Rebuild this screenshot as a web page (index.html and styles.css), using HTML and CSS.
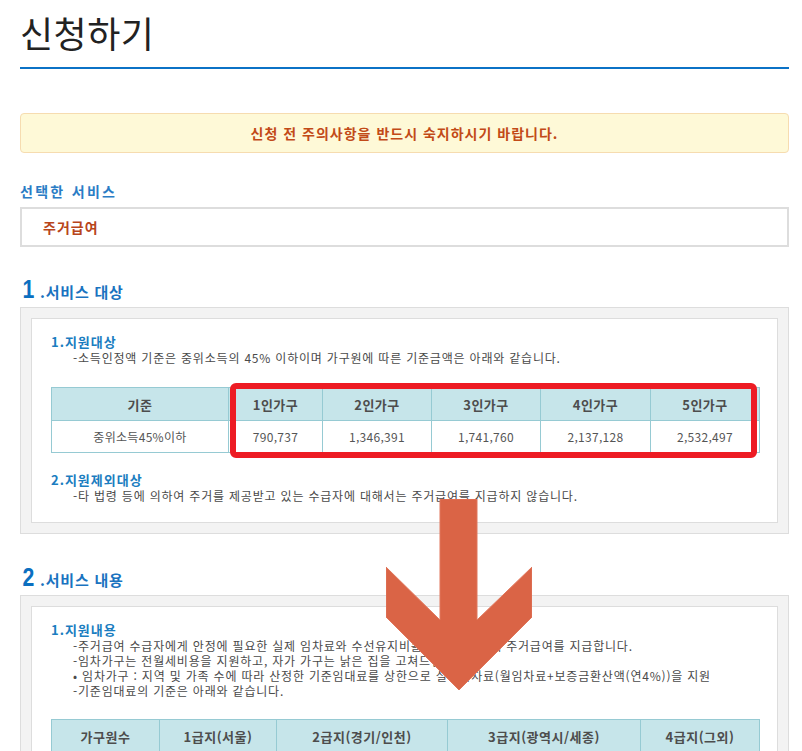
FILE: index.html
```html
<!DOCTYPE html>
<html lang="ko">
<head>
<meta charset="utf-8">
<title>신청하기</title>
<link rel="stylesheet" href="styles.css">
</head>
<body>
<div class="page">
  <h1 class="title">신청하기</h1>

  <div class="notice">신청 전 주의사항을 반드시 숙지하시기 바랍니다.</div>

  <h2 class="label">선택한 서비스</h2>
  <div class="service-box">주거급여</div>

  <h2 class="sec-head"><span class="num">1</span><span class="sec-text">.서비스 대상</span></h2>
  <div class="outer">
    <div class="inner">
      <h3 class="sub">1.지원대상</h3>
      <p class="desc">-소득인정액 기준은 중위소득의 45% 이하이며 가구원에 따른 기준금액은 아래와 같습니다.</p>
      <div class="table-wrap">
        <table class="grid t1">
          <colgroup>
            <col class="c177"><col class="c94"><col class="c109"><col class="c109"><col class="c110"><col class="c109">
          </colgroup>
          <thead>
            <tr><th>기준</th><th>1인가구</th><th>2인가구</th><th>3인가구</th><th>4인가구</th><th>5인가구</th></tr>
          </thead>
          <tbody>
            <tr><td>중위소득45%이하</td><td>790,737</td><td>1,346,391</td><td>1,741,760</td><td>2,137,128</td><td>2,532,497</td></tr>
          </tbody>
        </table>
        <div class="highlight"></div>
      </div>
      <h3 class="sub sub2">2.지원제외대상</h3>
      <p class="desc">-타 법령 등에 의하여 주거를 제공받고 있는 수급자에 대해서는 주거급여를 지급하지 않습니다.</p>
    </div>
  </div>

  <h2 class="sec-head sec2"><span class="num">2</span><span class="sec-text">.서비스 내용</span></h2>
  <div class="outer">
    <div class="inner">
      <h3 class="sub">1.지원내용</h3>
      <p class="desc">-주거급여 수급자에게 안정에 필요한 실제 임차료와 수선유지비를 지원하기 위해 주거급여를 지급합니다.</p>
      <p class="desc">-임차가구는 전월세비용을 지원하고, 자가 가구는 낡은 집을 고쳐드립니다.</p>
      <p class="desc">• 임차가구 : 지역 및 가족 수에 따라 산정한 기준임대료를 상한으로 실제임차료(월임차료+보증금환산액(연4%))을 지원</p>
      <p class="desc">-기준임대료의 기준은 아래와 같습니다.</p>
      <table class="grid t2">
        <colgroup>
          <col class="c108"><col class="c117"><col class="c171"><col class="c193"><col class="c119">
        </colgroup>
        <thead>
          <tr><th>가구원수</th><th>1급지(서울)</th><th>2급지(경기/인천)</th><th>3급지(광역시/세종)</th><th>4급지(그외)</th></tr>
        </thead>
      </table>
    </div>
  </div>
</div>

<svg class="arrow" width="146" height="191" viewBox="0 0 146 191" aria-hidden="true">
  <polygon points="54,0 91,0 91,121 146,68 146,118 73,191 0,118 0,68 54,121" fill="#da6446" stroke="#e0775c" stroke-width="1"/>
</svg>
</body>
</html>
```

FILE: styles.css
```css
html, body {
  margin: 0;
  padding: 0;
  background: #ffffff;
}

body {
  font-family: "Noto Sans CJK KR", "Noto Sans", sans-serif;
  color: #444;
  position: relative;
}

.page {
  width: 769px;
  margin-left: 20px;
  padding-bottom: 40px;
}

.title {
  margin: 0;
  padding: 10px 0 13px;
  font-size: 36px;
  line-height: 44px;
  font-weight: 400;
  color: #222;
  letter-spacing: 0.5px;
  border-bottom: 2px solid #0b72c6;
}

.notice {
  margin-top: 44px;
  height: 38px;
  line-height: 38px;
  text-align: center;
  background: #fef9d7;
  border: 1px solid #f6dcb0;
  border-radius: 4px;
  color: #c24a17;
  font-size: 14px;
  font-weight: 700;
  letter-spacing: 1px;
}

.label {
  margin: 28px 0 0;
  font-size: 14px;
  line-height: 20px;
  font-weight: 700;
  color: #2a7cc5;
  letter-spacing: 2.3px;
}

.service-box {
  margin-top: 6px;
  height: 36px;
  line-height: 36px;
  border: 2px solid #dddddd;
  padding-left: 21px;
  color: #b8451a;
  font-size: 14px;
  font-weight: 700;
  letter-spacing: 1px;
}

.sec-head {
  margin: 30px 0 0;
  height: 24px;
  line-height: 24px;
  display: flex;
  align-items: baseline;
  color: #1a73c0;
  font-weight: 700;
}

.sec-head.sec2 {
  margin-top: 31px;
}

.num {
  font-size: 25px;
  color: #0b6fc0;
  padding-left: 3px;
  font-family: "Liberation Sans", sans-serif;
  font-weight: 700;
  transform: scaleX(0.85);
  transform-origin: left center;
  width: 15px;
}

.sec-text {
  font-size: 15px;
  padding-left: 2px;
  letter-spacing: 0.8px;
}

.outer {
  margin-top: 6px;
  border: 1px solid #dddddd;
  background: #f3f3f3;
  padding: 10px;
}

.inner {
  background: #ffffff;
  border: 1px solid #dddddd;
  padding: 15px 19px 19px;
}

.sub {
  margin: 0;
  font-size: 13px;
  line-height: 16px;
  font-weight: 700;
  color: #1a7dc0;
  letter-spacing: 1px;
}

.sub2 {
  margin-top: 19px;
}

.desc {
  margin: 0;
  padding-left: 22px;
  font-size: 12px;
  line-height: 15px;
  color: #4a4a4a;
  white-space: nowrap;
  letter-spacing: 0.8px;
}

.table-wrap {
  position: relative;
  margin-top: 22px;
}

.grid {
  width: 708px;
  border-collapse: collapse;
  table-layout: fixed;
}

.t2 {
  margin-top: 21px;
}

.grid th,
.grid td {
  border: 1px solid #96cad3;
  text-align: center;
  padding: 0;
}

.grid th {
  height: 32px;
  background: #c6e5ea;
  color: #4d4d4d;
  font-size: 13px;
  font-weight: 700;
  letter-spacing: 0.5px;
}

.grid td {
  height: 31px;
  background: #ffffff;
  color: #555;
  font-size: 12px;
  letter-spacing: 0.3px;
}

.c177 { width: 177px; }
.c94 { width: 94px; }
.c108 { width: 108px; }
.c109 { width: 109px; }
.c110 { width: 110px; }
.c117 { width: 117px; }
.c119 { width: 119px; }
.c171 { width: 171px; }
.c193 { width: 193px; }

.highlight {
  position: absolute;
  left: 179px;
  top: -4px;
  width: 527px;
  height: 75px;
  box-sizing: border-box;
  border: 6px solid #ed1c24;
  border-radius: 6px;
  pointer-events: none;
}

.arrow {
  position: absolute;
  left: 386px;
  top: 499px;
}
```
